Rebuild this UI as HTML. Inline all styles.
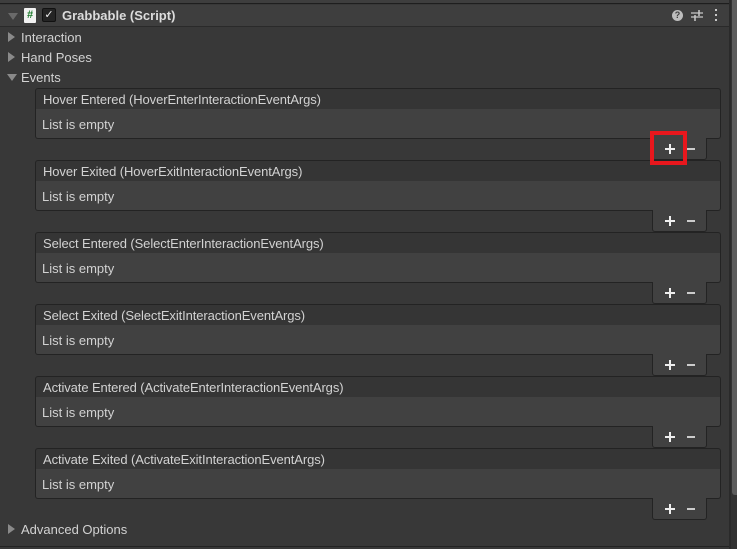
<!DOCTYPE html>
<html><head><style>
*{margin:0;padding:0;box-sizing:border-box}
body{width:737px;height:549px;background:#383838;font-family:"Liberation Sans",sans-serif;font-size:13px;color:#d2d2d2;position:relative;overflow:hidden}
.abs{position:absolute}
.tri{position:absolute;width:0;height:0}
.right{border-top:5px solid transparent;border-bottom:5px solid transparent;border-left:7px solid #8a8a8a}
.down{border-left:5px solid transparent;border-right:5px solid transparent;border-top:7px solid #8a8a8a}
.hdr{position:absolute;left:35px;width:686px;height:22px;background:#353535;border:1px solid #232323;border-radius:3px 3px 0 0;padding:3px 0 0 7px;color:#d2d2d2;letter-spacing:-0.1px}
.bd{position:absolute;left:35px;width:686px;height:30px;background:#414141;border:1px solid #232323;border-top:none;border-radius:0 0 3px 3px;padding:8px 0 0 6px}
.ft{position:absolute;left:652px;width:55px;height:22px;background:#414141;border:1px solid #232323;border-top:none;border-radius:0 0 3px 3px}
.p{position:absolute;left:12px;top:6px;width:10px;height:10px}
.p:before{content:"";position:absolute;left:0;top:4px;width:10px;height:2px;background:#eee}
.p:after{content:"";position:absolute;left:4px;top:0;width:2px;height:10px;background:#eee}
.m{position:absolute;left:34px;top:10px;width:8px;height:2px;background:#ccc}
</style></head><body>
<div class="abs" style="left:0;top:0;width:730px;height:4px;background:#3e3e3e;border-bottom:1px solid #1e1e1e"></div>
<div class="abs" style="left:0;top:5px;width:730px;height:22px;background:#3e3e3e;border-bottom:1px solid #2a2a2a"></div>
<div class="tri down" style="left:8px;top:13px;border-top-color:#6a6a6a"></div>
<div class="abs" style="left:24px;top:8px;width:12px;height:15px;background:#f2f2f2;border-radius:1px;color:#1a7a2a;font-weight:bold;font-size:11px;text-align:center;line-height:15px">#</div>
<div class="abs" style="left:42px;top:8px;width:14px;height:14px;background:#242424;border:1px solid #111;border-radius:2px;color:#eee;font-size:11px;text-align:center;line-height:12px">✓</div>
<div class="abs" style="left:62px;top:8px;font-weight:bold;color:#dcdcdc;font-size:13px">Grabbable (Script)</div>
<div class="abs" style="left:672px;top:10px;width:11px;height:11px;border-radius:50%;background:#bdbdbd;color:#3e3e3e;font-size:9px;font-weight:bold;text-align:center;line-height:11px">?</div>
<svg class="abs" style="left:691px;top:9px" width="12" height="12"><path d="M0 4h12M0 8h12" stroke="#c8c8c8" stroke-width="1.2"/><path d="M8 1v6M4 6v6" stroke="#c8c8c8" stroke-width="1.5"/></svg>
<div class="abs" style="left:715px;top:9px;width:2px;height:12px;background:linear-gradient(#c8c8c8 0 2px,transparent 2px 5px,#c8c8c8 5px 7px,transparent 7px 10px,#c8c8c8 10px 12px)"></div>

<div class="tri right" style="left:8px;top:32px"></div><div class="abs" style="left:21px;top:30px">Interaction</div>
<div class="tri right" style="left:8px;top:52px"></div><div class="abs" style="left:21px;top:50px">Hand Poses</div>
<div class="tri down" style="left:7px;top:74px"></div><div class="abs" style="left:21px;top:70px">Events</div>

<div class="hdr" style="top:88px">Hover Entered (HoverEnterInteractionEventArgs)</div>
<div class="bd" style="top:109px">List is empty</div>
<div class="ft" style="top:138px"><i class="p"></i><i class="m"></i></div>

<div class="hdr" style="top:160px">Hover Exited (HoverExitInteractionEventArgs)</div>
<div class="bd" style="top:181px">List is empty</div>
<div class="ft" style="top:210px"><i class="p"></i><i class="m"></i></div>

<div class="hdr" style="top:232px">Select Entered (SelectEnterInteractionEventArgs)</div>
<div class="bd" style="top:253px">List is empty</div>
<div class="ft" style="top:282px"><i class="p"></i><i class="m"></i></div>

<div class="hdr" style="top:304px">Select Exited (SelectExitInteractionEventArgs)</div>
<div class="bd" style="top:325px">List is empty</div>
<div class="ft" style="top:354px"><i class="p"></i><i class="m"></i></div>

<div class="hdr" style="top:376px">Activate Entered (ActivateEnterInteractionEventArgs)</div>
<div class="bd" style="top:397px">List is empty</div>
<div class="ft" style="top:426px"><i class="p"></i><i class="m"></i></div>

<div class="hdr" style="top:448px">Activate Exited (ActivateExitInteractionEventArgs)</div>
<div class="bd" style="top:469px">List is empty</div>
<div class="ft" style="top:498px"><i class="p"></i><i class="m"></i></div>

<div class="abs" style="left:650px;top:131px;width:37px;height:34px;border:4px solid #e8171d"></div>

<div class="tri right" style="left:8px;top:524px"></div><div class="abs" style="left:21px;top:522px">Advanced Options</div>
<div class="abs" style="left:0;top:546px;width:730px;height:1px;background:#232323"></div>

<div class="abs" style="left:729px;top:0;width:2px;height:549px;background:#2a2a2a"></div>
<div class="abs" style="left:731px;top:0;width:6px;height:549px;background:#323232"></div>
<div class="abs" style="left:732px;top:0;width:5px;height:495px;background:#5c5c5c;border-radius:0 0 0 3px"></div>
</body></html>
